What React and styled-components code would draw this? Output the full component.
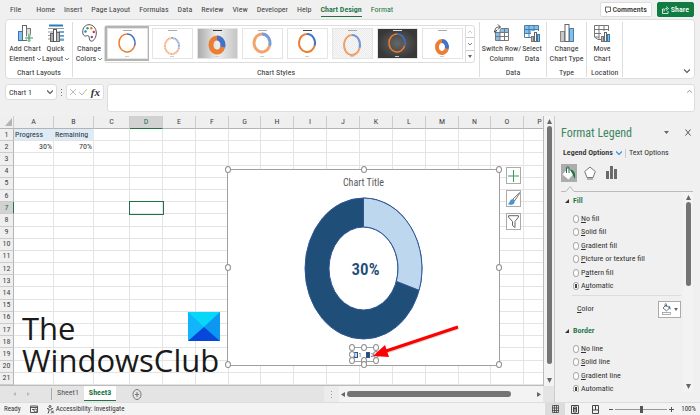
import styled, { createGlobalStyle } from 'styled-components'

const GlobalStyle = createGlobalStyle`
  * {
    box-sizing: border-box;
  }

  body {
    margin: 0;
    background-color: #f0f0f0;
    font-family: 'Roboto Condensed', Roboto, sans-serif;
    font-size: 8px;
    line-height: 10px;
    color: #333;
  }

  button, input {
    font: inherit;
    color: inherit;
    margin: 0;
    padding: 0;
    border: none;
    background: none;
  }

  svg {
    display: block;
    flex: none;
  }
`

const Page = styled.div`
  display: flex;
  flex-direction: column;
  height: 100vh;
  overflow: hidden;
`

/* ---------- top tabs ---------- */

const TabBar = styled.nav`
  display: flex;
  align-items: center;
  gap: 9px;
  height: 19px;
  padding: 0 6px 0 10px;
`

const TabLink = styled.a`
  height: 14px;
  line-height: 14px;
  margin-right: ${props => props.$wide ? '6px' : '0'};
  color: ${props => props.$green ? '#217346' : '#444'};
  font-weight: ${props => props.$active ? 600 : 400};
  border-bottom: ${props => props.$active ? '1px solid #217346' : 'none'};
  text-decoration: none;
  white-space: nowrap;
`

const TabActions = styled.div`
  display: flex;
  gap: 5px;
  margin-left: auto;
`

const ActionButton = styled.button`
  display: flex;
  align-items: center;
  gap: 2px;
  height: 15px;
  padding: 0 4px;
  font-weight: 500;
  border-radius: 2px;
  border: 1px solid ${props => props.$primary ? '#107c41' : '#ddd'};
  color: ${props => props.$primary ? '#fff' : '#333'};
  background-color: ${props => props.$primary ? '#107c41' : '#fff'};
`

/* ---------- ribbon ---------- */

const Ribbon = styled.section`
  display: flex;
  height: 60px;
  margin: 0 5px;
  padding: 2px 0 1px;
  background-color: #fff;
  border: 1px solid #ddd;
  border-radius: 4px;
`

const Group = styled.div`
  display: flex;
  flex-direction: column;
  justify-content: space-between;
  padding: 0 4px;
  border-right: 1px solid #ddd;
`

const GroupBody = styled.div`
  display: flex;
  gap: 3px;
`

const GroupLabel = styled.div`
  text-align: center;
  line-height: 8px;
  white-space: nowrap;
`

const ToolButton = styled.button`
  display: flex;
  flex-direction: column;
  align-items: center;
  width: ${props => props.$width}px;
  white-space: nowrap;
`

const ToolLabel = styled.span`
  display: flex;
  align-items: center;
  gap: 2px;
  height: 10px;
`

const IconBox = styled.span`
  display: flex;
  align-items: center;
  justify-content: center;
  height: 22px;
`

const Gallery = styled.div`
  display: flex;
  gap: 1px;
  height: 38px;
  margin: 3px 0 0;
  border: 1px solid #ddd;
  border-radius: 3px;
`

const Thumb = styled.button`
  display: flex;
  align-items: center;
  justify-content: center;
  width: 44px;
  height: 35px;
  border: 2px solid ${props => props.$active ? '#b4b4b0' : 'transparent'};
`

const GalleryScroll = styled.div`
  display: flex;
  flex-direction: column;
  width: 9px;
  border-left: 1px solid #ddd;
`

const ScrollStep = styled.button`
  display: flex;
  flex: 1;
  align-items: center;
  justify-content: center;
  border-top: ${props => props.$first ? 'none' : '1px solid #ccc'};
`

const Collapse = styled.button`
  display: flex;
  align-self: flex-end;
  margin: 0 4px 3px auto;
`

/* ---------- formula bar ---------- */

const FormulaBar = styled.section`
  display: flex;
  align-items: flex-start;
  gap: 3px;
  margin: 5px 5px 4px;
`

const FieldBox = styled.div`
  display: flex;
  align-items: center;
  justify-content: space-between;
  width: ${props => props.$width}px;
  height: 16px;
  padding: 0 3px;
  background-color: #fff;
  border: 1px solid #ddd;
  border-radius: 3px;
`

const NameInput = styled.input`
  width: 36px;
  height: 12px;
  outline: none;
`

const Dots = styled.div`
  display: flex;
  align-items: center;
  height: 16px;
  padding: 0 1px;
`

const FunctionButton = styled.button`
  font: italic bold 11px 'Liberation Serif', serif;
`

const IconButton = styled.button`
  display: flex;
`

const FormulaBox = styled.div`
  display: flex;
  flex: 1;
  align-items: flex-start;
  height: 28px;
  padding: 4px 2px;
  background-color: #fff;
  border: 1px solid #ddd;
  border-radius: 3px;
`

const FormulaInput = styled.input`
  flex: 1;
  outline: none;
`

/* ---------- worksheet ---------- */

const Main = styled.main`
  display: flex;
  flex: 1;
  min-height: 0;
`

const Workbook = styled.div`
  display: flex;
  flex: 1;
  flex-direction: column;
  min-width: 0;
`

const SheetRow = styled.div`
  display: flex;
  flex: 1;
  min-height: 0;
`

const Sheet = styled.div`
  position: relative;
  flex: 1;
  min-width: 0;
  overflow: hidden;
  background-color: #fff;
  border-bottom: 1px solid #bbb;
  border-right: 1px solid #bbb;
`

const Grid = styled.table`
  width: 100%;
  min-width: 556px;
  height: 100%;
  table-layout: fixed;
  border-collapse: separate;
  border-spacing: 0;
`

const ColHead = styled.th`
  height: 13px;
  padding: 0;
  font-weight: 400;
  text-align: center;
  color: ${props => props.$active ? '#217346' : '#444'};
  background-color: ${props => props.$active ? '#d2d2d2' : '#efefef'};
  border-right: 1px solid #ccc;
  border-bottom: 1px solid ${props => props.$active ? '#217346' : '#b4b4b4'};
`

const Corner = styled.th`
  height: 13px;
  padding: 1px;
  background-color: #efefef;
  border-right: 1px solid #ccc;
  border-bottom: 1px solid #b4b4b4;

  svg {
    margin-left: auto;
  }
`

const RowHead = styled.th`
  padding: 0;
  font-weight: 400;
  text-align: center;
  color: ${props => props.$active ? '#217346' : '#444'};
  background-color: ${props => props.$active ? '#d2d2d2' : '#efefef'};
  border-right: 1px solid ${props => props.$active ? '#217346' : '#b4b4b4'};
  border-bottom: 1px solid #ccc;
`

const Cell = styled.td`
  padding: 0 1px;
  text-align: ${props => props.$number ? 'right' : 'left'};
  background-color: ${props => props.$filled ? '#ddebf7' : '#fff'};
  border-right: 1px solid ${props => props.$filled ? '#ddebf7' : '#e4e4e4'};
  border-bottom: 1px solid #e4e4e4;
  outline: ${props => props.$selected ? '1px solid #217346' : 'none'};
`

const ScrollTrack = styled.div`
  display: flex;
  flex-direction: ${props => props.$horizontal ? 'row' : 'column'};
  align-items: center;
  gap: 2px;
  width: ${props => props.$horizontal ? '204px' : '10px'};
  padding: ${props => props.$horizontal ? '2px 2px' : '3px 0'};
  background-color: #f3f3f3;
`

const ScrollThumb = styled.div`
  flex: ${props => props.$grow};
  width: ${props => props.$horizontal ? 'auto' : '5px'};
  height: ${props => props.$horizontal ? '6px' : 'auto'};
  border-radius: 3px;
  background-color: #747474;
`

const ScrollRest = styled.div`
  flex: ${props => props.$grow};
`

/* ---------- chart on the sheet ---------- */

const ChartFrame = styled.div`
  position: absolute;
  left: 227px;
  top: 53px;
  width: 273px;
  height: 197px;
  display: flex;
  flex-direction: column;
  align-items: center;
  padding-top: 6px;
  background-color: #fff;
  border: 1px solid #a0a0a0;
`

const ChartTitle = styled.div`
  font-size: 10px;
  line-height: 14px;
  color: #595959;
`

const Donut = styled.div`
  position: relative;
  margin-top: 7px;
`

const DonutValue = styled.div`
  position: absolute;
  inset: 0;
  display: flex;
  align-items: center;
  justify-content: center;
  padding-left: 4px;
  font-size: 17px;
  font-weight: 600;
  color: #1f4e79;
`

const Legend = styled.div`
  position: relative;
  display: flex;
  align-items: center;
  justify-content: center;
  gap: 4px;
  width: 26px;
  height: 15px;
  margin-top: 7px;
  border: 1px solid #a0a0a0;
`

const LegendItem = styled.div`
  display: flex;
  align-items: center;
  gap: 1px;
  font-size: 6px;
  color: #595959;
`

const Swatch = styled.span`
  width: 4px;
  height: 6px;
  border: 1px solid #2f5597;
  background-color: ${props => props.$color};
`

const Handle = styled.span`
  position: absolute;
  left: ${props => props.$x}%;
  top: ${props => props.$y}%;
  width: 6px;
  height: 7px;
  margin: -4px 0 0 -3px;
  border: 1px solid #909090;
  border-radius: 50%;
  background-color: #fff;
`

const ChartTools = styled.div`
  position: absolute;
  left: 506px;
  top: 51px;
  display: flex;
  flex-direction: column;
  gap: 6px;
`

const ChartTool = styled.button`
  display: flex;
  align-items: center;
  justify-content: center;
  width: 15px;
  height: 17px;
  background-color: #fff;
  border: 1px solid #ababab;
`

const Arrow = styled.svg`
  position: absolute;
  left: 370px;
  top: 207px;
`

const Brand = styled.div`
  position: absolute;
  left: 22px;
  top: 196px;
  width: 198px;
  font-family: 'Open Sans', sans-serif;
  font-size: 31px;
  line-height: 32px;
  color: #1a1a1a;
`

const BrandTop = styled.div`
  display: flex;
  align-items: flex-start;
  justify-content: space-between;
`

/* ---------- sheet tabs and status ---------- */

const SheetTabs = styled.div`
  display: flex;
  height: 16px;
  background-color: #e4e4e4;
`

const SheetNav = styled.div`
  display: flex;
  align-items: center;
  gap: 11px;
  width: 52px;
  padding-left: 13px;
  margin: 2px 0;
  border-right: 1px solid #aaa;
`

const SheetTab = styled.button`
  height: 15px;
  padding: 0 5px;
  color: ${props => props.$active ? '#217346' : '#555'};
  font-weight: ${props => props.$active ? 700 : 400};
  background-color: ${props => props.$active ? '#fff' : 'transparent'};
  border-bottom: 1px solid ${props => props.$active ? '#217346' : 'transparent'};
`

const AddSheet = styled.button`
  display: flex;
  align-items: center;
  margin-left: 16px;
`

const SplitGrip = styled.div`
  display: flex;
  align-items: center;
  justify-content: center;
  width: 15px;
  margin-left: auto;
  background-color: #ececec;
`

const SheetTabsEnd = styled.div`
  width: 11px;
`

const StatusBar = styled.footer`
  display: flex;
  align-items: center;
  height: 13px;
  padding: 0 4px;
  font-size: 7px;
  background-color: #f3f3f3;
  border-top: 1px solid #ddd;
`

const StatusItem = styled.span`
  display: flex;
  align-items: center;
  gap: 2px;
  margin-right: 9px;
`

const ViewButtons = styled.div`
  display: flex;
  margin-left: auto;
`

const ViewButton = styled.button`
  display: flex;
  align-items: center;
  justify-content: center;
  width: 20px;
  height: 12px;
  background-color: ${props => props.$active ? '#dcdcdc' : 'transparent'};
`

const Zoom = styled.div`
  display: flex;
  align-items: center;
  gap: 2px;
  margin-left: 4px;
`

const ZoomRange = styled.input`
  appearance: none;
  width: 52px;
  height: 8px;
  background: linear-gradient(#999, #999) center / 100% 1px no-repeat;

  &::-webkit-slider-thumb {
    appearance: none;
    width: 3px;
    height: 7px;
    background-color: #555;
  }
`

const ZoomValue = styled.span`
  margin-left: 5px;
`

/* ---------- format pane ---------- */

const Pane = styled.aside`
  display: flex;
  flex-direction: column;
  width: 146px;
  padding: 8px 7px 10px 6px;
  border-left: 1px solid #ccc;
`

const PaneHeader = styled.header`
  display: flex;
  align-items: center;
  gap: 16px;
  height: 17px;
  padding-right: 2px;
`

const PaneTitle = styled.h2`
  flex: 1;
  margin: 0;
  font-size: 12px;
  font-weight: 400;
  color: #3d8560;
  white-space: nowrap;
`

const PaneTabs = styled.div`
  display: flex;
  align-items: center;
  gap: 3px;
  height: 12px;
  margin-top: 6px;
  padding-left: 2px;
`

const PaneTab = styled.button`
  display: flex;
  align-items: center;
  gap: 3px;
  font-weight: ${props => props.$active ? 600 : 400};
  white-space: nowrap;
`

const PaneDivider = styled.span`
  width: 1px;
  height: 9px;
  background-color: #ccc;
`

const PaneIcons = styled.div`
  display: flex;
  gap: 5px;
  margin-top: 5px;
`

const PaneIcon = styled.button`
  display: flex;
  align-items: center;
  justify-content: center;
  width: 16px;
  height: 18px;
  background-color: ${props => props.$active ? '#acacac' : 'transparent'};
`

const PaneBody = styled.div`
  display: flex;
  flex: 1;
  min-height: 0;
  overflow: hidden;
`

const Options = styled.div`
  flex: 1;
  padding-top: 4px;
`

const SectionTitle = styled.h3`
  display: flex;
  align-items: center;
  gap: 4px;
  height: 10px;
  margin: 0 0 6px 4px;
  font-size: 8px;
  font-weight: 600;
  color: #217346;
`

const RadioList = styled.div`
  display: grid;
  grid-auto-rows: 1fr;
  height: ${props => props.$height}px;
  padding-left: 12px;
`

const RadioLabel = styled.label`
  display: flex;
  align-items: center;
  gap: 2px;
`

const Radio = styled.input`
  appearance: none;
  width: 6px;
  height: 8px;
  border: 1px solid #aaa;
  border-radius: 50%;
  background-color: #fff;

  &:checked {
    background: radial-gradient(ellipse, #444 40%, #fff 55%);
  }
`

const ColorRow = styled.div`
  display: flex;
  align-items: center;
  justify-content: space-between;
  height: 27px;
  margin: 2px 2px 4px 11px;
  padding-left: 5px;
  border-top: 1px solid #ddd;
`

const ColorButton = styled.button`
  display: flex;
  align-items: center;
  justify-content: center;
  gap: 3px;
  width: 23px;
  height: 17px;
  background-color: #fff;
  border: 1px solid #ababab;
`

/* ---------- drawings ---------- */

const Chevron = ({ size = 4, color = '#555', up }) => (
  <svg width={size} height={size} viewBox="0 0 8 8">
    <path d={up ? 'M0 6L4 2L8 6' : 'M0 2L4 6L8 2'} fill="none" stroke={color} strokeWidth="1.5" />
  </svg>
)

const Triangle = ({ points, width = 5, height = 5, color = '#666' }) => (
  <svg width={width} height={height} viewBox="0 0 6 6" preserveAspectRatio="none">
    <polygon points={points} fill={color} />
  </svg>
)

const UP = '0,6 3,0 6,6'
const DOWN = '0,0 6,0 3,6'
const LEFT = '6,0 6,6 0,3'
const RIGHT = '0,0 6,3 0,6'
const CORNER = '6,0 6,6 0,6'

const AddElementIcon = () => (
  <svg width="15" height="19" viewBox="0 0 15 19" fill="none">
    <rect x="0.5" y="7.5" width="4" height="9" fill="#83beec" stroke="#2b7cba" />
    <rect x="4.5" y="1.5" width="4" height="15" fill="#fff" stroke="#666" />
    <rect x="8.5" y="4.5" width="4" height="12" fill="#ddd" stroke="#777" />
    <path d="M11 10V18M7 14H15" stroke="#fff" strokeWidth="3" />
    <path d="M11 10V18M7 14H15" stroke="#2f9e5b" strokeWidth="1.2" />
  </svg>
)

const QuickLayoutIcon = () => (
  <svg width="16" height="19" viewBox="0 0 16 19" fill="none">
    <path d="M1 1.5H15" stroke="#2b7cba" strokeWidth="2" />
    <path d="M0 4.5H16M0 8H16M0 11.5H16M0 15H16" stroke="#999" />
    <path d="M11 8H16M11 12H16M11 16H16" stroke="#4a9ad4" strokeWidth="1.5" />
    <rect x="2.5" y="9.5" width="3" height="8" fill="#aaa" stroke="#666" />
    <rect x="5.5" y="5.5" width="3" height="12" fill="#fff" stroke="#555" />
    <rect x="8.5" y="8.5" width="3" height="9" fill="#bbb" stroke="#666" />
  </svg>
)

const PaletteIcon = () => (
  <svg width="15" height="18" viewBox="0 0 15 18">
    <path d="M7 .7C3 .7.7 4 .7 8c0 3 1.4 4 3 4s2-1 3 0 0 5 2.500 5.200C12 17.200 14.300 13 14.300 9 14.300 4 11 .7 7 .7Z" fill="#fff" stroke="#555" />
    <circle cx="3.500" cy="7.500" r="1.200" fill="#2b7cba" />
    <circle cx="5.500" cy="4.300" r="1.200" fill="#2f9e5b" />
    <circle cx="9.300" cy="4.300" r="1.200" fill="#e8792b" />
    <circle cx="11.800" cy="8" r="1.200" fill="#d13438" />
    <circle cx="9.800" cy="13" r="1.200" fill="#8e44ad" />
  </svg>
)

const SwitchIcon = () => (
  <svg width="16" height="18" viewBox="0 0 16 18" fill="none">
    <rect x="1.500" y="4.500" width="13" height="12" fill="#fff" />
    <path d="M1.500 8.500H6V4.500H14.500V8.500H6V16.500H1.500Z" fill="#83beec" />
    <path d="M1.500 4.500H14.500V16.500H1.500ZM1.500 8.500H14.500M1.500 12.500H14.500M6 4.500V16.500M10.500 4.500V16.500" stroke="#777" />
    <path d="M0 0H7V4L4 8H0Z" fill="#fff" />
    <path d="M1 8C1 4 2 3 6 3M4 .5L6.500 3L4 5.500M-.5 6L1 8.500L3 6" stroke="#444" />
  </svg>
)

const SelectDataIcon = () => (
  <svg width="16" height="18" viewBox="0 0 16 18" fill="none">
    <rect x=".5" y="1.500" width="14" height="12" fill="#fff" />
    <path d="M.5 1.500H14.500V5.500H10V9.500H.5Z" fill="#83beec" />
    <path d="M.5 1.500H14.500V13.500H.5ZM.5 5.500H14.500M.5 9.500H14.500M5 1.500V13.500M10 1.500V13.500" stroke="#4a7fa8" />
    <rect x="7" y="7" width="9" height="11" fill="#fff" />
    <rect x="7.500" y="12.500" width="2" height="5" fill="#bbb" stroke="#777" />
    <rect x="10.500" y="8.500" width="2" height="9" fill="#fff" stroke="#666" />
    <rect x="13.500" y="10.500" width="2" height="7" fill="#83beec" stroke="#2b7cba" />
  </svg>
)

const ChangeTypeIcon = () => (
  <svg width="14" height="18" viewBox="0 0 14 18">
    <rect x=".5" y="7.500" width="4" height="10" fill="#c8c8c8" stroke="#888" />
    <rect x="5" y=".5" width="4" height="17" fill="#fff" stroke="#666" />
    <rect x="9.500" y="4.500" width="4" height="13" fill="#83beec" stroke="#4a7fa8" />
  </svg>
)

const MoveChartIcon = () => (
  <svg width="16" height="18" viewBox="0 0 16 18" fill="none">
    <path d="M.5 1.500H14.500V15.500H4L.5 13ZM.5 5.500H14.500M.5 9.500H14.500M5 1.500V13M10 1.500V13M.5 13H5V15.500" stroke="#777" />
    <rect x="7" y="7" width="9" height="11" fill="#fff" />
    <rect x="7.500" y="12.500" width="2" height="5" fill="#bbb" stroke="#777" />
    <rect x="10.500" y="8.500" width="2" height="9" fill="#fff" stroke="#666" />
    <rect x="13.500" y="10.500" width="2" height="7" fill="#83beec" stroke="#2b7cba" />
  </svg>
)

const BucketIcon = () => (
  <svg width="14" height="15" viewBox="0 0 14 15">
    <path d="M6 3L11 8L6.500 13L1 8.500Z" fill="#fff" stroke="#fff" />
    <path d="M4.500 7V2C4.500 .3 7 .3 7 2V7" fill="none" stroke="#217346" />
    <path d="M8 3.500C12 4 14 7 12.800 13L10.500 8Z" fill="#217346" />
  </svg>
)

const FillColorIcon = () => (
  <svg width="9" height="12" viewBox="0 0 9 12">
    <path d="M4 2L7.500 5L4.500 8L1 5Z" fill="#fff" stroke="#555" strokeWidth=".8" />
    <path d="M3 4V1.500C3 .3 4.500 .3 4.500 1.500V4" fill="none" stroke="#555" strokeWidth=".7" />
    <path d="M6.500 2.500C8.500 3 8.700 5 8.300 7L7 5Z" fill="#2b7cba" />
    <rect x=".5" y="9.500" width="8" height="2" fill="#fff" stroke="#999" strokeWidth=".8" />
  </svg>
)

function ThumbChart({ cy = 15, rx = 8, ry = 9, stroke = 2, bg = '#fff', faded, dash, line = '#aaa' }) {
  const cx = 20
  const edgeX = cx + rx * 0.951
  const edgeY = cy + ry * 0.309
  return (
    <svg width="41" height="31" viewBox="0 0 41 31" fill="none">
      <defs>
        <linearGradient id="silver" x2="1">
          <stop offset="0" stopColor="#aaa" />
          <stop offset=".5" stopColor="#eee" />
          <stop offset="1" stopColor="#c4c4c4" />
        </linearGradient>
        <radialGradient id="dark">
          <stop offset="0" stopColor="#666" />
          <stop offset="1" stopColor="#383838" />
        </radialGradient>
        <pattern id="check" width="2" height="2" patternUnits="userSpaceOnUse">
          <rect width="2" height="2" fill="#f8f8f8" />
          <path d="M0 0H1V1H2V2H1V1H0Z" fill="#eaeaea" />
        </pattern>
      </defs>
      <rect x=".5" y=".5" width="40" height="30" fill={bg} stroke="#e4e4e4" />
      <path d="M16 2.500H25" stroke={line} />
      <g strokeWidth={stroke} opacity={faded ? 0.7 : 1} strokeDasharray={dash}>
        <path d={`M${edgeX} ${edgeY}A${rx} ${ry} 0 1 1 ${cx} ${cy - ry}`} stroke="#ed7d31" />
        <path d={`M${cx} ${cy - ry}A${rx} ${ry} 0 0 1 ${edgeX} ${edgeY}`} stroke="#4472c4" />
      </g>
      <path d="M18 28.500H22" stroke="#ccc" />
    </svg>
  )
}

const DonutDrawing = () => (
  <svg width="119" height="143" viewBox="0 0 119 143" stroke="#2f5597" strokeWidth="1">
    <path fillRule="evenodd" fill="#1f4e79" d="M1 71.500A58.500 70.500 0 1 1 118 71.500A58.500 70.500 0 1 1 1 71.500ZM25 71.500A34.500 41.500 0 1 0 94 71.500A34.500 41.500 0 1 0 25 71.500Z" />
    <path fill="#bdd7ee" d="M59.500 1A58.500 70.500 0 0 1 115.100 93.300L92.300 84.300A34.500 41.500 0 0 0 59.500 30Z" />
  </svg>
)

const BrandLogo = () => (
  <svg width="32" height="29" viewBox="0 0 32 29">
    <rect width="32" height="29" fill="#12b5fb" />
    <path d="M0 0H32L16 15Z" fill="#08d8f8" />
    <path d="M32 0V29L16 15Z" fill="#0c98f0" />
    <path d="M0 29H32L16 15Z" fill="#0747dc" />
  </svg>
)

/* ---------- data ---------- */

const tabs = ['File', 'Home', 'Insert', 'Page Layout', 'Formulas', 'Data', 'Review', 'View', 'Developer', 'Help', 'Chart Design', 'Format']

const styleThumbs = [
  { stroke: 1.5 },
  { cy: 18, rx: 7, ry: 8, stroke: 2, faded: true, dash: '1 .5' },
  { cy: 17, rx: 6, ry: 7, stroke: 5, bg: 'url(#silver)', line: '#333' },
  { stroke: 3, faded: true },
  { stroke: 2, line: '#444' },
  { cy: 17, ry: 10, bg: 'url(#check)', faded: true },
  { stroke: 1.5, bg: 'url(#dark)', line: '#ddd' },
  { cy: 19, rx: 5, ry: 6, stroke: 4 },
]

const columns = [
  ['A', 40], ['B', 40], ['C', 36], ['D', 33], ['E', 33], ['F', 33], ['G', 32], ['H', 33],
  ['I', 33], ['J', 33], ['K', 33], ['L', 33], ['M', 33], ['N', 32], ['O', 33], ['P', 33],
]

const cells = { A1: 'Progress', B1: 'Remaining', A2: '30%', B2: '70%' }

const fillOptions = [['N', 'o fill'], ['S', 'olid fill'], ['G', 'radient fill'], ['P', 'icture or texture fill'], ['P', 'attern fill', 'a'], ['A', 'utomatic', 'u']]
const lineOptions = [['N', 'o line'], ['S', 'olid line'], ['G', 'radient line'], ['A', 'utomatic', 'u']]

const handles = [[0, 0], [50, 0], [100, 0], [0, 50], [100, 50], [0, 100], [50, 100], [100, 100]]

/* ---------- parts ---------- */

function Tool({ icon, first, second, menu, width }) {
  return (
    <ToolButton $width={width}>
      <IconBox>{icon}</IconBox>
      <ToolLabel>{first}</ToolLabel>
      <ToolLabel>{second}{menu && <Chevron />}</ToolLabel>
    </ToolButton>
  )
}

function RadioOption({ name, option }) {
  const [first, rest, key] = option
  return (
    <RadioLabel>
      <Radio type="radio" name={name} defaultChecked={first === 'A'} />
      {key
        ? <span>{first}<u>{key}</u>{rest.slice(1)}</span>
        : <span><u>{first}</u>{rest}</span>}
    </RadioLabel>
  )
}

function Worksheet() {
  return (
    <Grid>
      <colgroup>
        <col width="14" />
        {columns.map(([name, width]) => <col key={name} width={name === 'P' ? undefined : width} />)}
      </colgroup>
      <thead>
        <tr>
          <Corner><Triangle points={CORNER} width={7} height={8} color="#b4b4b4" /></Corner>
          {columns.map(([name]) => <ColHead key={name} $active={name === 'D'}>{name}</ColHead>)}
        </tr>
      </thead>
      <tbody>
        {Array.from({ length: 21 }, (_, i) => i + 1).map(row => (
          <tr key={row}>
            <RowHead $active={row === 7}>{row}</RowHead>
            {columns.map(([name]) => {
              const id = name + row
              return (
                <Cell
                  key={id}
                  $number={row === 2}
                  $filled={row === 1 && id in cells}
                  $selected={id === 'D7'}
                >
                  {cells[id]}
                </Cell>
              )
            })}
          </tr>
        ))}
      </tbody>
    </Grid>
  )
}

function Chart() {
  return (
    <ChartFrame>
      <ChartTitle>Chart Title</ChartTitle>
      <Donut>
        <DonutDrawing />
        <DonutValue>30%</DonutValue>
      </Donut>
      <Legend>
        <LegendItem><Swatch $color="#bdd7ee" />1</LegendItem>
        <LegendItem><Swatch $color="#1f4e79" />2</LegendItem>
        {handles.map(([x, y]) => <Handle key={`${x}-${y}`} $x={x} $y={y} />)}
      </Legend>
      {handles.map(([x, y]) => <Handle key={`${x}-${y}`} $x={x} $y={y} />)}
    </ChartFrame>
  )
}

function FormatPane() {
  return (
    <Pane>
      <PaneHeader>
        <PaneTitle>Format Legend</PaneTitle>
        <IconButton aria-label="Pane options"><Triangle points={DOWN} height={3} /></IconButton>
        <IconButton aria-label="Close pane">
          <svg width="6" height="7" viewBox="0 0 6 7"><path d="M.5 .5L5.500 6.500M5.500 .5L.5 6.500" stroke="#555" /></svg>
        </IconButton>
      </PaneHeader>
      <PaneTabs>
        <PaneTab $active>Legend Options <Chevron size={6} color="#2b88d8" /></PaneTab>
        <PaneDivider />
        <PaneTab>Text Options</PaneTab>
      </PaneTabs>
      <PaneIcons>
        <PaneIcon $active aria-label="Fill and line"><BucketIcon /></PaneIcon>
        <PaneIcon aria-label="Effects">
          <svg width="12" height="14" viewBox="0 0 12 14"><path d="M6 1L11.300 5.500L9 11.500H3L.7 5.500ZM3 13H9" fill="#fff" stroke="#777" /></svg>
        </PaneIcon>
        <PaneIcon aria-label="Legend options">
          <svg width="11" height="14" viewBox="0 0 11 14" fill="#6a6a6a"><path d="M0 5H3V13H0ZM4 0H7V13H4ZM8 3H11V13H8Z" /></svg>
        </PaneIcon>
      </PaneIcons>
      <svg width="100%" height="10" viewBox="0 0 132 10" preserveAspectRatio="xMinYMid slice">
        <path d="M0 9.500H5L9 4.500L13 9.500H400" fill="none" stroke="#bbb" />
      </svg>
      <PaneBody>
        <Options>
          <SectionTitle><Triangle points={CORNER} width={4} height={4} color="#333" />Fill</SectionTitle>
          <RadioList $height={81}>
            {fillOptions.map(option => <RadioOption key={option[0] + option[1]} name="fill" option={option} />)}
          </RadioList>
          <ColorRow>
            <span><u>C</u>olor</span>
            <ColorButton aria-label="Color">
              <FillColorIcon />
              <Triangle points={DOWN} width={4} height={3} />
            </ColorButton>
          </ColorRow>
          <SectionTitle><Triangle points={CORNER} width={4} height={4} color="#333" />Border</SectionTitle>
          <RadioList $height={54}>
            {lineOptions.map(option => <RadioOption key={option[1]} name="border" option={option} />)}
          </RadioList>
        </Options>
        <ScrollTrack>
          <Triangle points={UP} />
          <ScrollThumb $grow={84} />
          <ScrollRest $grow={94} />
          <Triangle points={DOWN} />
        </ScrollTrack>
      </PaneBody>
    </Pane>
  )
}

function App() {
  return (
    <Page>
      <GlobalStyle />
      <TabBar>
        {tabs.map(tab => (
          <TabLink
            key={tab}
            href="#"
            $wide={tab === 'File'}
            $active={tab === 'Chart Design'}
            $green={tab === 'Chart Design' || tab === 'Format'}
          >
            {tab}
          </TabLink>
        ))}
        <TabActions>
          <ActionButton>
            <svg width="6" height="8" viewBox="0 0 6 8"><path d="M.5 1H5.500V5.500H3L1.500 7V5.500H.5Z" fill="none" stroke="#444" strokeWidth=".8" /></svg>
            Comments
          </ActionButton>
          <ActionButton $primary>
            <svg width="7" height="8" viewBox="0 0 7 8"><path d="M2 3H.5V7.500H6V5M2 5.500C2 3 3 2.500 5 2.500M4 .5L6.500 2.500L4 4.500" fill="none" stroke="#fff" strokeWidth=".8" /></svg>
            Share
          </ActionButton>
        </TabActions>
      </TabBar>

      <Ribbon>
        <Group>
          <GroupBody>
            <Tool icon={<AddElementIcon />} first="Add Chart" second="Element" menu width={30} />
            <Tool icon={<QuickLayoutIcon />} first="Quick" second="Layout" menu width={25} />
          </GroupBody>
          <GroupLabel>Chart Layouts</GroupLabel>
        </Group>
        <Group>
          <GroupBody>
            <Tool icon={<PaletteIcon />} first="Change" second="Colors" menu width={24} />
            <Gallery>
              {styleThumbs.map((thumb, i) => (
                <Thumb key={i} $active={i === 0} aria-label={`Style ${i + 1}`}><ThumbChart {...thumb} /></Thumb>
              ))}
              <GalleryScroll>
                <ScrollStep $first aria-label="Scroll up"><Chevron up color="#bbb" /></ScrollStep>
                <ScrollStep aria-label="Scroll down"><Chevron /></ScrollStep>
                <ScrollStep aria-label="More styles"><Triangle points={DOWN} width={4} height={3} /></ScrollStep>
              </GalleryScroll>
            </Gallery>
          </GroupBody>
          <GroupLabel>Chart Styles</GroupLabel>
        </Group>
        <Group>
          <GroupBody>
            <Tool icon={<SwitchIcon />} first="Switch Row/" second="Column" width={35} />
            <Tool icon={<SelectDataIcon />} first="Select" second="Data" width={20} />
          </GroupBody>
          <GroupLabel>Data</GroupLabel>
        </Group>
        <Group>
          <GroupBody>
            <Tool icon={<ChangeTypeIcon />} first="Change" second="Chart Type" width={31} />
          </GroupBody>
          <GroupLabel>Type</GroupLabel>
        </Group>
        <Group>
          <GroupBody>
            <Tool icon={<MoveChartIcon />} first="Move" second="Chart" width={22} />
          </GroupBody>
          <GroupLabel>Location</GroupLabel>
        </Group>
        <Collapse aria-label="Collapse ribbon"><Chevron size={6} /></Collapse>
      </Ribbon>

      <FormulaBar>
        <FieldBox $width={52}>
          <NameInput defaultValue="Chart 1" aria-label="Name box" />
          <Chevron size={6} />
        </FieldBox>
        <Dots>
          <svg width="1" height="7" viewBox="0 0 1 7" fill="#777"><path d="M0 0H1V1H0ZM0 3H1V4H0ZM0 6H1V7H0Z" /></svg>
        </Dots>
        <FieldBox $width={38}>
          <IconButton aria-label="Cancel">
            <svg width="6" height="8" viewBox="0 0 6 8"><path d="M0 1L6 7M6 1L0 7" stroke="#bbb" /></svg>
          </IconButton>
          <IconButton aria-label="Enter">
            <svg width="8" height="8" viewBox="0 0 8 8"><path d="M0 4L3 7L8 1" fill="none" stroke="#bbb" /></svg>
          </IconButton>
          <FunctionButton>fx</FunctionButton>
        </FieldBox>
        <FormulaBox>
          <FormulaInput aria-label="Formula" />
          <Chevron size={5} up color="#888" />
        </FormulaBox>
      </FormulaBar>

      <Main>
        <Workbook>
          <SheetRow>
            <Sheet>
              <Worksheet />
              <Brand>
                <BrandTop>The <BrandLogo /></BrandTop>
                WindowsClub
              </Brand>
              <Chart />
              <ChartTools>
                <ChartTool aria-label="Chart elements">
                  <svg width="11" height="12" viewBox="0 0 11 12"><path d="M5.500 0V12M0 6H11" stroke="#3a9a63" /></svg>
                </ChartTool>
                <ChartTool aria-label="Chart styles">
                  <svg width="12" height="13" viewBox="0 0 12 13">
                    <path d="M11.500 .7L5 7L6.500 9L11.500 1.500Z" fill="#fff" stroke="#555" strokeWidth=".8" />
                    <path d="M4.500 7.500C1.500 8 2.500 11 .5 12C4 13 6.500 12 6.300 9.500Z" fill="#4a9ad4" stroke="#2b7cba" strokeWidth=".6" />
                  </svg>
                </ChartTool>
                <ChartTool aria-label="Chart filters">
                  <svg width="11" height="13" viewBox="0 0 11 13"><path d="M.5 .7H10.500V2L7 6.500V12.500L4.500 10.500V6.500L.5 2Z" fill="#fff" stroke="#666" /></svg>
                </ChartTool>
              </ChartTools>
              <Arrow width="92" height="38" viewBox="0 0 92 38">
                <path d="M88 5L17 29" stroke="#999" strokeWidth="3" opacity=".4" />
                <path d="M88 4L16 28" stroke="#f00" strokeWidth="3" />
                <path d="M3 33L15 22L19 34Z" fill="#f00" />
              </Arrow>
            </Sheet>
            <ScrollTrack>
              <Triangle points={UP} />
              <ScrollThumb $grow={239} />
              <ScrollRest $grow={10} />
              <Triangle points={DOWN} />
            </ScrollTrack>
          </SheetRow>
          <SheetTabs>
            <SheetNav>
              <Triangle points={LEFT} width={3} height={4} color="#bbb" />
              <Triangle points={RIGHT} width={3} height={4} color="#bbb" />
            </SheetNav>
            <SheetTab>Sheet1</SheetTab>
            <SheetTab $active>Sheet3</SheetTab>
            <AddSheet aria-label="New sheet">
              <svg width="10" height="11" viewBox="0 0 10 11" fill="none" stroke="#777">
                <ellipse cx="5" cy="5.500" rx="4" ry="5" />
                <path d="M5 3V8M3 5.500H7" />
              </svg>
            </AddSheet>
            <SplitGrip>
              <svg width="1" height="7" viewBox="0 0 1 7" fill="#999"><path d="M0 0H1V1H0ZM0 3H1V4H0ZM0 6H1V7H0Z" /></svg>
            </SplitGrip>
            <ScrollTrack $horizontal>
              <Triangle points={LEFT} width={4} />
              <ScrollThumb $horizontal $grow={165} />
              <ScrollRest $grow={22} />
              <Triangle points={RIGHT} width={4} />
            </ScrollTrack>
            <SheetTabsEnd />
          </SheetTabs>
        </Workbook>
        <FormatPane />
      </Main>

      <StatusBar>
        <StatusItem>Ready</StatusItem>
        <StatusItem>
          <svg width="8" height="8" viewBox="0 0 8 8" fill="none" stroke="#555"><path d="M.5 1H7.500V7.500H.5ZM0 2.500H8M2 4.500H4" /><circle cx="5.500" cy="5.500" r="1.500" /></svg>
        </StatusItem>
        <StatusItem>
          <svg width="7" height="9" viewBox="0 0 7 9" fill="none" stroke="#444"><circle cx="3" cy="1.500" r="1" /><path d="M0 3.500L2 4V6L1 8.500M6 3.500L4 4V5M4 5.500L7 8.500M7 5.500L4 8.500" /></svg>
          Accessibility: Investigate
        </StatusItem>
        <ViewButtons>
          <ViewButton $active aria-label="Normal view">
            <svg width="7" height="8" viewBox="0 0 7 8"><path d="M.5 .5H6.500V7.500H.5ZM2.500 0V8M4.500 0V8M0 3H7M0 5.500H7" fill="none" stroke="#444" strokeWidth=".8" /></svg>
          </ViewButton>
          <ViewButton aria-label="Page layout view">
            <svg width="8" height="9" viewBox="0 0 8 9"><path d="M.5 .5H7.500V8.500H.5ZM2.500 2H5.500V7H2.500ZM2.500 3.500H5.500M2.500 5H5.500" fill="none" stroke="#444" /></svg>
          </ViewButton>
          <ViewButton aria-label="Page break view">
            <svg width="7" height="9" viewBox="0 0 7 9"><path d="M.5 .5H6.500V8.500H.5ZM3.500 0V5M.5 5H3.500M3.500 5H6.500" fill="none" stroke="#444" /></svg>
          </ViewButton>
        </ViewButtons>
        <Zoom>
          <IconButton aria-label="Zoom out"><svg width="4" height="5" viewBox="0 0 4 5"><path d="M0 2.500H4" stroke="#555" /></svg></IconButton>
          <ZoomRange type="range" aria-label="Zoom" />
          <IconButton aria-label="Zoom in"><svg width="5" height="5" viewBox="0 0 5 5"><path d="M0 2.500H5M2.500 0V5" stroke="#555" /></svg></IconButton>
          <ZoomValue>100%</ZoomValue>
        </Zoom>
      </StatusBar>
    </Page>
  )
}

export default App
